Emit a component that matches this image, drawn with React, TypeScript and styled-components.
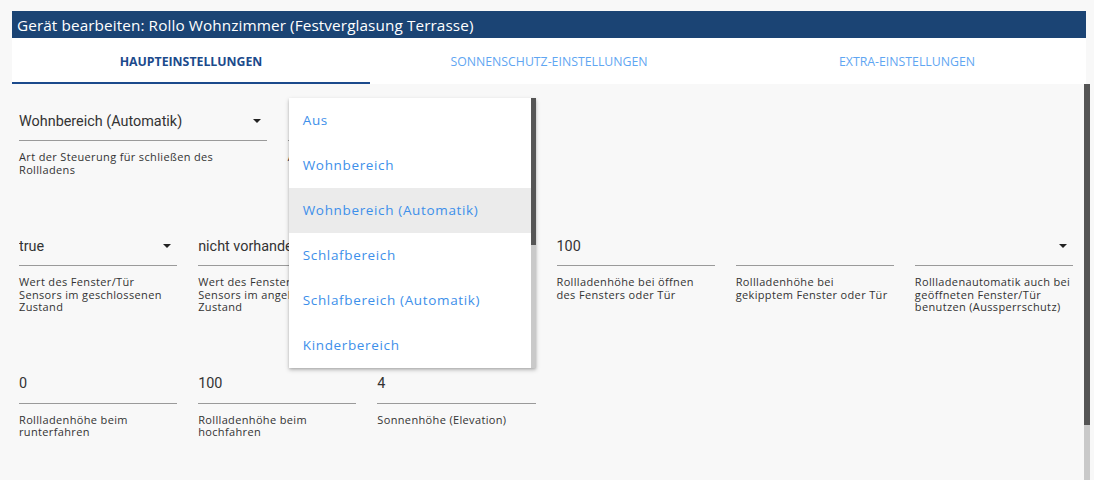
import React from 'react';
import styled, { createGlobalStyle } from 'styled-components';

const GlobalStyle = createGlobalStyle`
  html, body {
    margin: 0;
    padding: 0;
    background: #f8f8f8;
    overflow: hidden;
  }
  body {
    font-family: 'Open Sans', 'Liberation Sans', sans-serif;
  }
`;

const Page = styled.div`
  padding: 11px 0 0 12px;
  height: 469px;
  display: flex;
  flex-direction: column;
`;

const Header = styled.div`
  width: 1074px;
  height: 27px;
  background: #1b4474;
  color: #fff;
  display: flex;
  align-items: center;
  padding-left: 5px;
  box-sizing: border-box;
  font-family: 'Open Sans', sans-serif;
  font-size: 15.3px;
  letter-spacing: 0.1px;
`;

const TabBar = styled.div`
  width: 1074px;
  height: 46px;
  background: #fff;
  display: grid;
  grid-template-columns: repeat(3, 1fr);
`;

const Tab = styled.div<{ $active?: boolean }>`
  display: flex;
  align-items: center;
  justify-content: center;
  font-family: 'Open Sans', sans-serif;
  font-size: 12.3px;
  font-weight: ${p => (p.$active ? 700 : 400)};
  color: ${p => (p.$active ? '#1b4a8c' : '#5fa6f2')};
  border-bottom: 2px solid ${p => (p.$active ? '#1b4a8c' : 'transparent')};
  padding-top: 3px;
  box-sizing: border-box;
`;

const Body = styled.div`
  flex: 1;
  display: flex;
  width: 1078px;
`;

const Content = styled.div`
  flex: 1;
  padding: 20px 11px 0 7px;
  display: flex;
  flex-direction: column;
  gap: 53px;
`;

const Row = styled.div<{ $cols: number }>`
  display: grid;
  grid-template-columns: repeat(${p => p.$cols}, 1fr);
  column-gap: 21px;
`;

const Field = styled.div`
  position: relative;
  min-width: 0;
`;

const Value = styled.div`
  height: 37px;
  box-sizing: border-box;
  border-bottom: 1px solid #9a9a9a;
  padding-bottom: 2px;
  display: flex;
  align-items: center;
  justify-content: space-between;
  font-family: Roboto, 'Liberation Sans', sans-serif;
  font-size: 14.4px;
  color: #333;
  white-space: nowrap;
  overflow: hidden;
`;

const Arrow = styled.span`
  width: 0;
  height: 0;
  border-left: 4.5px solid transparent;
  border-right: 4.5px solid transparent;
  border-top: 4.5px solid #222;
  margin-right: 6px;
  flex-shrink: 0;
`;

const Helper = styled.div`
  margin-top: 10px;
  font-family: 'Open Sans', sans-serif;
  font-size: 11px;
  line-height: 12.5px;
  letter-spacing: 0.35px;
  color: #333;
`;

const Menu = styled.div`
  position: absolute;
  top: -6px;
  left: 1px;
  width: 247px;
  height: 270px;
  background: #fff;
  box-shadow: 0 2px 4px rgba(0, 0, 0, 0.25), 0 1px 2px rgba(0, 0, 0, 0.1);
  display: flex;
  z-index: 5;
`;

const MenuList = styled.div`
  flex: 1;
  display: flex;
  flex-direction: column;
`;

const MenuItem = styled.div<{ $selected?: boolean }>`
  height: 45px;
  display: flex;
  align-items: center;
  padding-left: 14px;
  padding-bottom: 2px;
  box-sizing: border-box;
  font-family: 'Open Sans', sans-serif;
  font-size: 13.5px;
  letter-spacing: 0.65px;
  color: #3d8fea;
  background: ${p => (p.$selected ? '#ebebeb' : 'transparent')};
`;

const Track = styled.div<{ $w: number }>`
  width: ${p => p.$w}px;
  background: #c9c9c9;
  display: flex;
  flex-direction: column;
`;

const Thumb = styled.div`
  background: #555;
`;

type FieldDef = { value?: string; select?: boolean; helper: string };

const row2: FieldDef[] = [
  { value: 'true', select: true, helper: 'Wert des Fenster/Tür Sensors im geschlossenen Zustand' },
  { value: 'nicht vorhanden', select: true, helper: 'Wert des Fenster/Tür Sensors im angekippten Zustand' },
  { value: 'nicht vorhanden', select: true, helper: 'Wert des Fenster/Tür Sensors im geöffneten Zustand' },
  { value: '100', helper: 'Rollladenhöhe bei öffnen des Fensters oder Tür' },
  { value: '', helper: 'Rollladenhöhe bei gekipptem Fenster oder Tür' },
  { value: '', select: true, helper: 'Rollladenautomatik auch bei geöffneten Fenster/Tür benutzen (Aussperrschutz)' },
];

const row3: FieldDef[] = [
  { value: '0', helper: 'Rollladenhöhe beim runterfahren' },
  { value: '100', helper: 'Rollladenhöhe beim hochfahren' },
  { value: '4', helper: 'Sonnenhöhe (Elevation)' },
];

const options = [
  'Aus',
  'Wohnbereich',
  'Wohnbereich (Automatik)',
  'Schlafbereich',
  'Schlafbereich (Automatik)',
  'Kinderbereich',
];

function FormField({ value, select, helper }: FieldDef) {
  return (
    <Field>
      <Value>
        <span>{value}</span>
        {select && <Arrow />}
      </Value>
      <Helper>{helper}</Helper>
    </Field>
  );
}

export default function App() {
  return (
    <>
      <GlobalStyle />
      <Page>
        <Header>Gerät bearbeiten: Rollo Wohnzimmer (Festverglasung Terrasse)</Header>
        <TabBar>
          <Tab $active>HAUPTEINSTELLUNGEN</Tab>
          <Tab>SONNENSCHUTZ-EINSTELLUNGEN</Tab>
          <Tab>EXTRA-EINSTELLUNGEN</Tab>
        </TabBar>
        <Body>
          <Content>
            <Row $cols={4}>
              <FormField value="Wohnbereich (Automatik)" select helper="Art der Steuerung für schließen des Rollladens" />
              <Field>
                <Value>
                  <span />
                  <Arrow />
                </Value>
                <Helper>Art der Steuerung für öffnen des Rollladens</Helper>
                <Menu>
                  <MenuList>
                    {options.map(o => (
                      <MenuItem key={o} $selected={o === 'Wohnbereich (Automatik)'}>{o}</MenuItem>
                    ))}
                  </MenuList>
                  <Track $w={5}>
                    <Thumb style={{ height: 147 }} />
                  </Track>
                </Menu>
              </Field>
            </Row>
            <Row $cols={6}>
              {row2.map((f, i) => <FormField key={i} {...f} />)}
            </Row>
            <Row $cols={6}>
              {row3.map((f, i) => <FormField key={i} {...f} />)}
            </Row>
          </Content>
          <Track $w={6}>
            <Thumb style={{ height: 341 }} />
          </Track>
        </Body>
      </Page>
    </>
  );
}
